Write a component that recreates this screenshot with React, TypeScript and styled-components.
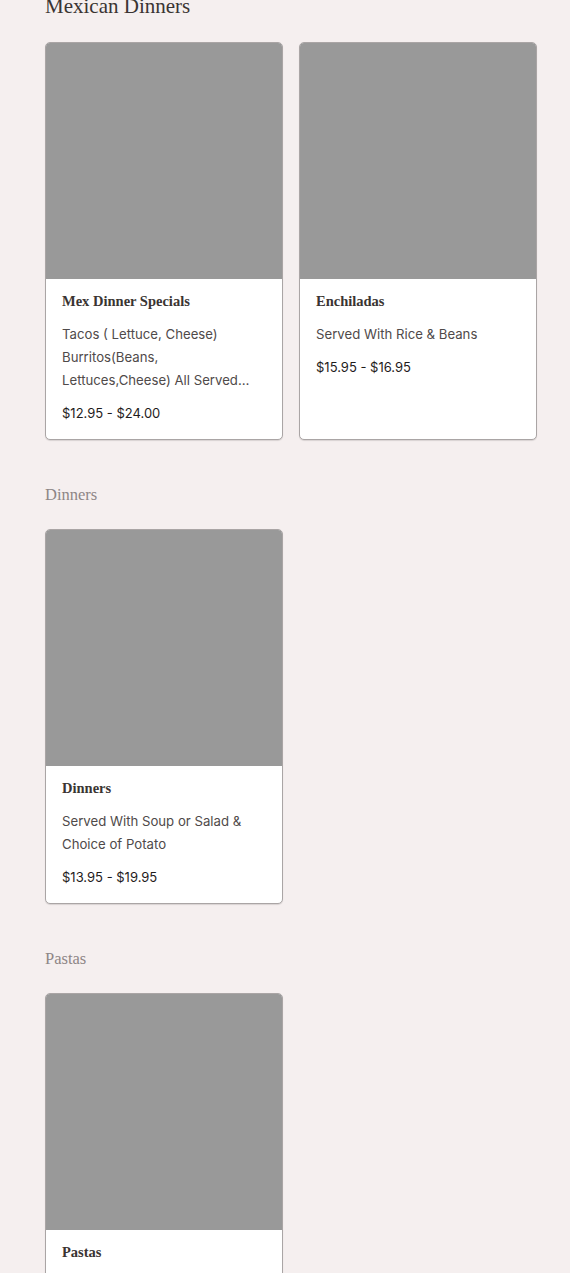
import React, { FC } from 'react'
import styled, { createGlobalStyle } from 'styled-components'

const GlobalStyle = createGlobalStyle`
  html, body {
    margin: 0;
    padding: 0;
    background: #f5efef;
  }
  body {
    font-family: Inter, 'Open Sans', 'Liberation Sans', sans-serif;
    overflow: hidden;
  }
`

const Page = styled.div`
  margin-top: -4px;
  padding: 0 33px 40px 45px;
  display: flex;
  flex-direction: column;
  gap: 43px;
`

const Section = styled.section`
  display: flex;
  flex-direction: column;
  gap: 22px;
`

const SectionTitle = styled.h2<{ $faded?: boolean }>`
  margin: 0;
  font-family: 'Liberation Serif', 'DejaVu Serif', serif;
  font-weight: 400;
  font-size: ${({ $faded }) => ($faded ? '16.5px' : '21px')};
  line-height: ${({ $faded }) => ($faded ? '24px' : '20px')};
  padding-bottom: ${({ $faded }) => ($faded ? '0' : '4px')};
  color: ${({ $faded }) => ($faded ? '#8e8686' : '#3a3432')};
`

const Grid = styled.div`
  display: grid;
  grid-template-columns: 238px 238px;
  gap: 16px;
`

const Card = styled.div`
  background: #ffffff;
  border: 1px solid #aaa5a5;
  border-radius: 5px;
  overflow: hidden;
  box-shadow: 0 1px 1px rgba(0, 0, 0, 0.12);
  display: flex;
  flex-direction: column;
`

const Thumb = styled.div`
  height: 236px;
  background: #999999;
`

const Body = styled.div`
  padding: 13px 16px 16px 16px;
  display: flex;
  flex-direction: column;
`

const ItemName = styled.div`
  font-family: 'Liberation Serif', 'DejaVu Serif', serif;
  font-weight: 700;
  font-size: 14.5px;
  line-height: 18px;
  color: #3a3432;
`

const Description = styled.div`
  margin-top: 13px;
  font-size: 13.2px;
  line-height: 23px;
  color: #4f4a4a;
  display: -webkit-box;
  -webkit-line-clamp: 3;
  -webkit-box-orient: vertical;
  overflow: hidden;
`

const Price = styled.div`
  margin-top: 11px;
  font-size: 13px;
  line-height: 20px;
  color: #1f1c1c;
`

interface MenuItem {
  name: string
  description: string
  price: string
}

interface MenuSection {
  title: string
  faded?: boolean
  items: MenuItem[]
}

const sections: MenuSection[] = [
  {
    title: 'Mexican Dinners',
    items: [
      {
        name: 'Mex Dinner Specials',
        description:
          'Tacos ( Lettuce, Cheese) Burritos(Beans, Lettuces,Cheese) All Served With Rice & Beans',
        price: '$12.95 - $24.00',
      },
      {
        name: 'Enchiladas',
        description: 'Served With Rice & Beans',
        price: '$15.95 - $16.95',
      },
    ],
  },
  {
    title: 'Dinners',
    faded: true,
    items: [
      {
        name: 'Dinners',
        description: 'Served With Soup or Salad & Choice of Potato',
        price: '$13.95 - $19.95',
      },
    ],
  },
  {
    title: 'Pastas',
    faded: true,
    items: [
      {
        name: 'Pastas',
        description: 'Served With Soup or Salad & Garlic Bread',
        price: '$12.95 - $18.95',
      },
    ],
  },
]

const ItemCard: FC<{ item: MenuItem }> = ({ item }) => (
  <Card>
    <Thumb />
    <Body>
      <ItemName>{item.name}</ItemName>
      <Description>{item.description}</Description>
      <Price>{item.price}</Price>
    </Body>
  </Card>
)

const App: FC = () => {
  return (
    <>
      <GlobalStyle />
      <Page>
        {sections.map((section) => (
          <Section key={section.title}>
            <SectionTitle $faded={section.faded}>{section.title}</SectionTitle>
            <Grid>
              {section.items.map((item) => (
                <ItemCard key={item.name} item={item} />
              ))}
            </Grid>
          </Section>
        ))}
      </Page>
    </>
  )
}

export default App
